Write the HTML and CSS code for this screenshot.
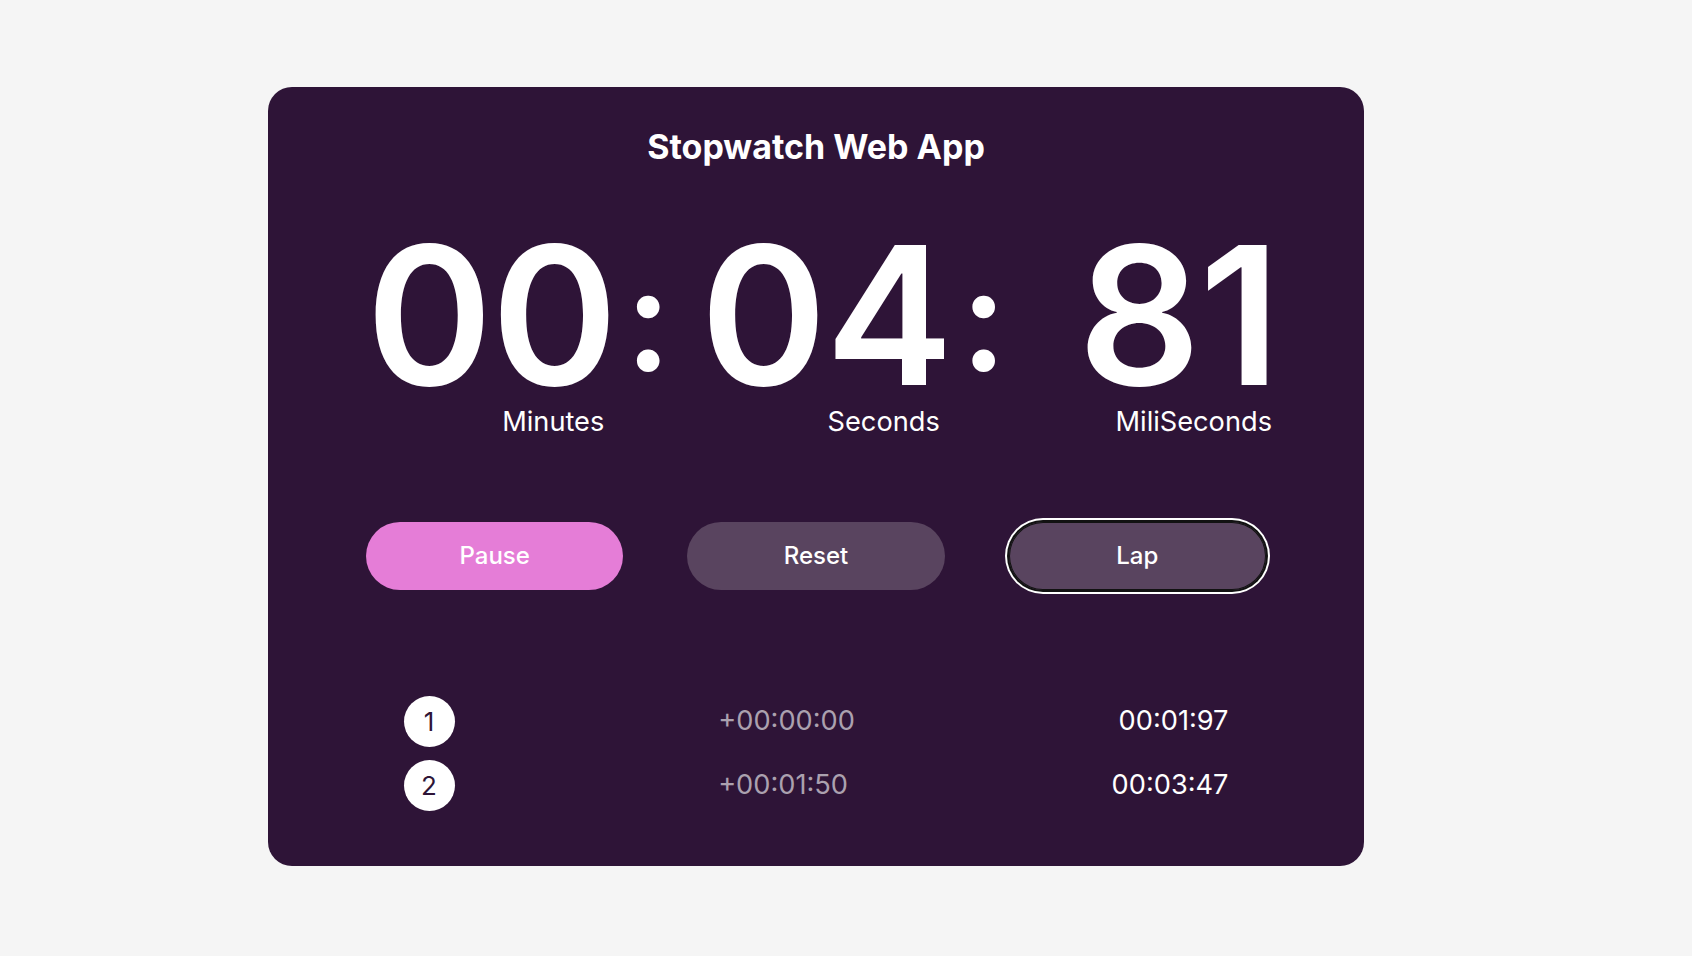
FILE: index.html
```html
<!DOCTYPE html>
<html lang="en">
<head>
<meta charset="utf-8">
<title>Stopwatch Web App</title>
<link rel="stylesheet" href="styles.css">
</head>
<body>
<div class="page">
  <main class="card">
    <h1 class="title">Stopwatch Web App</h1>
    <div class="clock">
      <div class="unit">
        <span class="digits">00</span>
        <span class="label">Minutes</span>
      </div>
      <span class="colon">:</span>
      <div class="unit">
        <span class="digits">04</span>
        <span class="label">Seconds</span>
      </div>
      <span class="colon">:</span>
      <div class="unit unit-ms">
        <span class="digits">81</span>
        <span class="label">MiliSeconds</span>
      </div>
    </div>
    <div class="controls">
      <button class="btn btn-pause">Pause</button>
      <button class="btn btn-muted">Reset</button>
      <button class="btn btn-muted btn-focus">Lap</button>
    </div>
    <ul class="laps">
      <li class="lap">
        <span class="lap-num">1</span>
        <span class="lap-diff">+00:00:00</span>
        <span class="lap-total">00:01:97</span>
      </li>
      <li class="lap">
        <span class="lap-num">2</span>
        <span class="lap-diff">+00:01:50</span>
        <span class="lap-total">00:03:47</span>
      </li>
    </ul>
  </main>
</div>
</body>
</html>
```

FILE: styles.css
```css
* {
  box-sizing: border-box;
}

html, body {
  margin: 0;
  padding: 0;
  background: #f5f5f5;
}

body {
  font-family: Inter, "Noto Sans", sans-serif;
  color: #ffffff;
}

.page {
  padding: 87px 0 0 268px;
}

.card {
  width: 1096px;
  background: #2e1437;
  border-radius: 24px;
  padding: 40px 0 55px;
  display: flex;
  flex-direction: column;
  align-items: center;
}

.title {
  margin: 0;
  font-size: 34px;
  line-height: 1.2;
  font-weight: 700;
}

.clock {
  width: 900px;
  margin-top: 56px;
  display: flex;
  align-items: flex-start;
}

.unit {
  display: flex;
  flex-direction: column;
  align-items: flex-end;
}

.unit-ms {
  margin-left: auto;
  margin-right: -13px;
}

.digits {
  font-size: 192px;
  line-height: 0.95;
  font-weight: 600;
  letter-spacing: -1.5px;
}

.label {
  font-size: 27.2px;
  line-height: 1.2;
  font-weight: 400;
  margin-right: 12px;
}

.unit-ms .label {
  margin-right: 7px;
}

.colon {
  font-size: 144px;
  line-height: 1;
  font-weight: 600;
  margin: 23.5px 29px 0 9px;
}

.controls {
  width: 900px;
  margin-top: 83px;
  display: grid;
  grid-template-columns: repeat(3, 1fr);
  gap: 64px;
}

.btn {
  height: 68px;
  border: none;
  border-radius: 34px;
  font-family: Inter, "Noto Sans", sans-serif;
  font-size: 24px;
  font-weight: 500;
  color: #ffffff;
  cursor: pointer;
}

.btn-pause {
  background: #e57dd7;
}

.btn-muted {
  background: #59445f;
}

.btn-focus {
  box-shadow: inset 0 0 0 1px #121212, 0 0 0 2px #121212, 0 0 0 4px #ffffff;
}

.laps {
  list-style: none;
  margin: 106px 0 0;
  padding: 0;
  width: 825px;
  display: flex;
  flex-direction: column;
  gap: 13px;
}

.lap {
  display: flex;
  align-items: center;
  justify-content: space-between;
  font-size: 27.2px;
  line-height: 1.2;
}

.lap-num {
  width: 51px;
  height: 51px;
  border-radius: 50%;
  background: #ffffff;
  color: #2e1437;
  font-size: 26px;
  display: flex;
  align-items: center;
  justify-content: center;
}

.lap-diff {
  color: #aba1af;
}

.lap-total {
  color: #ffffff;
}
```
